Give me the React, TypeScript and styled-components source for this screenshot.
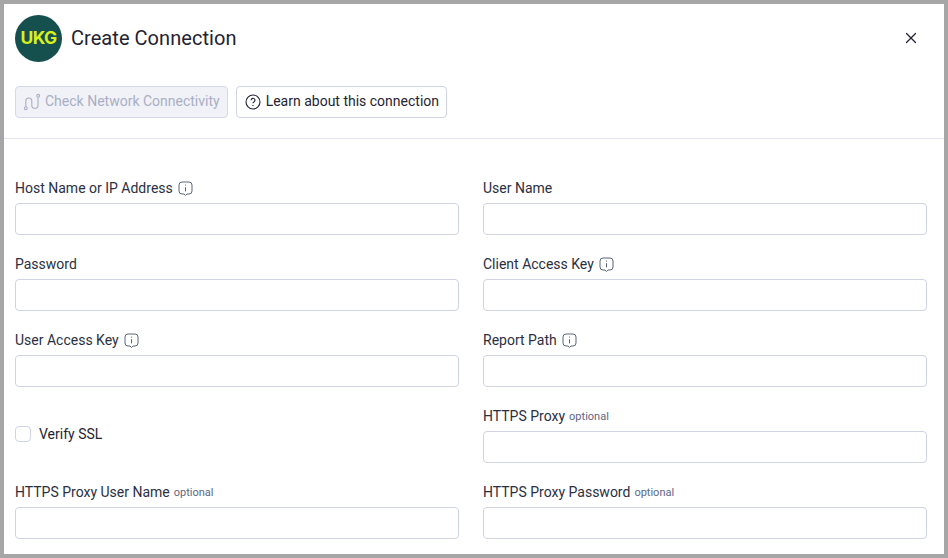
import { createGlobalStyle, styled } from "styled-components";
import { X } from "lucide-react";

const GlobalStyle = createGlobalStyle`
  html, body {
    margin: 0;
    padding: 0;
    height: 100%;
    overflow: hidden;
  }
  body {
    font-family: Roboto, "Liberation Sans", sans-serif;
    color: #1f2333;
  }
  * {
    box-sizing: border-box;
  }
`;

const Frame = styled.div`
  width: 948px;
  height: 558px;
  border: 4px solid #a6a6a6;
  background: #fff;
  overflow: hidden;
`;

const Header = styled.div`
  display: flex;
  align-items: center;
  height: 68px;
  padding: 0 17px 0 11px;
`;

const Title = styled.h1`
  margin: 0 0 0 9px;
  font-size: 20px;
  font-weight: 400;
  letter-spacing: 0.05px;
`;

const CloseButton = styled.button`
  margin-left: auto;
  width: 32px;
  height: 32px;
  display: flex;
  align-items: center;
  justify-content: center;
  padding: 0;
  border: 0;
  background: none;
  color: #1f2333;
`;

const Actions = styled.div`
  display: flex;
  gap: 8px;
  height: 67px;
  padding: 14px 11px 0;
  border-bottom: 1px solid #e1e3ee;
`;

const ActionButton = styled.button<{ $disabled?: boolean }>`
  display: flex;
  align-items: center;
  gap: ${(p) => (p.$disabled ? "4px" : "5px")};
  height: 32px;
  padding: 0 7px 0 ${(p) => (p.$disabled ? "7px" : "8px")};
  border: 1px solid ${(p) => (p.$disabled ? "#d5d8e6" : "#d0d3e3")};
  border-radius: 4px;
  background: ${(p) => (p.$disabled ? "#f1f2f8" : "#fff")};
  color: ${(p) => (p.$disabled ? "#a9aec4" : "#1f2333")};
  font-family: inherit;
  font-size: 14px;
`;

const ButtonText = styled.span`
  padding-bottom: 2px;
`;

const Form = styled.div`
  display: grid;
  grid-template-columns: 444px 444px;
  column-gap: 24px;
  row-gap: 17px;
  padding: 37px 11px 0;
`;

const Field = styled.div`
  display: flex;
  flex-direction: column;
  height: 59px;
`;

const Label = styled.label`
  display: flex;
  align-items: center;
  height: 24px;
  margin-bottom: 3px;
  font-size: 14px;
  color: #2b2f3f;
`;

const Optional = styled.span`
  margin-left: 4px;
  font-size: 11px;
  color: #5d6685;
`;

const InfoIcon = styled.svg`
  margin-left: 5px;
`;

const Input = styled.input`
  height: 32px;
  width: 100%;
  border: 1px solid #d0d3e3;
  border-radius: 4px;
  background: #fff;
`;

const CheckRow = styled.label`
  display: flex;
  align-items: center;
  gap: 8px;
  height: 59px;
  font-size: 14px;
`;

const CheckBox = styled.span`
  width: 16px;
  height: 16px;
  border: 1px solid #d0d3e3;
  border-radius: 4px;
`;

const Info = () => (
  <InfoIcon width="15" height="15" viewBox="0 0 15 15" fill="none" stroke="#5d6478">
    <path d="M4 1h7a3 3 0 0 1 3 3v6a3 3 0 0 1-3 3H9l-1.5 1.5L6 13H4a3 3 0 0 1-3-3V4a3 3 0 0 1 3-3z" />
    <path d="M7.5 6.2v4.2" />
    <path d="M7.5 3.6v1" />
  </InfoIcon>
);

const UkgLogo = () => (
  <svg width="47" height="47" viewBox="0 0 47 47">
    <circle cx="23.5" cy="23.5" r="23.5" fill="#15504f" />
    <text
      x="23.5"
      y="29"
      textAnchor="middle"
      fontFamily="Inter, sans-serif"
      fontWeight="700"
      fontSize="17.5"
      letterSpacing="-0.6"
      fill="#d8f11a"
    >
      UKG
    </text>
  </svg>
);

const RouteIcon = () => (
  <svg width="18" height="18" viewBox="0 0 18 18" fill="none" stroke="#a9aec4" strokeWidth="1.1">
    <circle cx="2.8" cy="15.2" r="1.4" />
    <circle cx="15.2" cy="2.8" r="1.4" />
    <path d="M2.8 13.8V8a3 3 0 0 1 6 0v4.2a3 3 0 0 0 6.2 0V4.2" />
  </svg>
);

const HelpIcon = () => (
  <svg width="16" height="16" viewBox="0 0 16 16" fill="none" stroke="#1f2333" strokeWidth="1.1">
    <circle cx="8" cy="8" r="7" />
    <path d="M6.1 6.2a1.9 1.9 0 1 1 2.8 1.7c-.6.3-.9.7-.9 1.4" />
    <path d="M8 11v.9" />
  </svg>
);

type FieldProps = { label: string; info?: boolean; optional?: boolean };

const TextField = ({ label, info, optional }: FieldProps) => (
  <Field>
    <Label>
      {label}
      {optional && <Optional>optional</Optional>}
      {info && <Info />}
    </Label>
    <Input type="text" />
  </Field>
);

export default function App() {
  return (
    <Frame>
      <GlobalStyle />
      <Header>
        <UkgLogo />
        <Title>Create Connection</Title>
        <CloseButton aria-label="Close">
          <X size={18} strokeWidth={1.6} />
        </CloseButton>
      </Header>
      <Actions>
        <ActionButton $disabled>
          <RouteIcon />
          <ButtonText>Check Network Connectivity</ButtonText>
        </ActionButton>
        <ActionButton>
          <HelpIcon />
          <ButtonText>Learn about this connection</ButtonText>
        </ActionButton>
      </Actions>
      <Form>
        <TextField label="Host Name or IP Address" info />
        <TextField label="User Name" />
        <TextField label="Password" />
        <TextField label="Client Access Key" info />
        <TextField label="User Access Key" info />
        <TextField label="Report Path" info />
        <CheckRow>
          <CheckBox />
          Verify SSL
        </CheckRow>
        <TextField label="HTTPS Proxy" optional />
        <TextField label="HTTPS Proxy User Name" optional />
        <TextField label="HTTPS Proxy Password" optional />
      </Form>
    </Frame>
  );
}
